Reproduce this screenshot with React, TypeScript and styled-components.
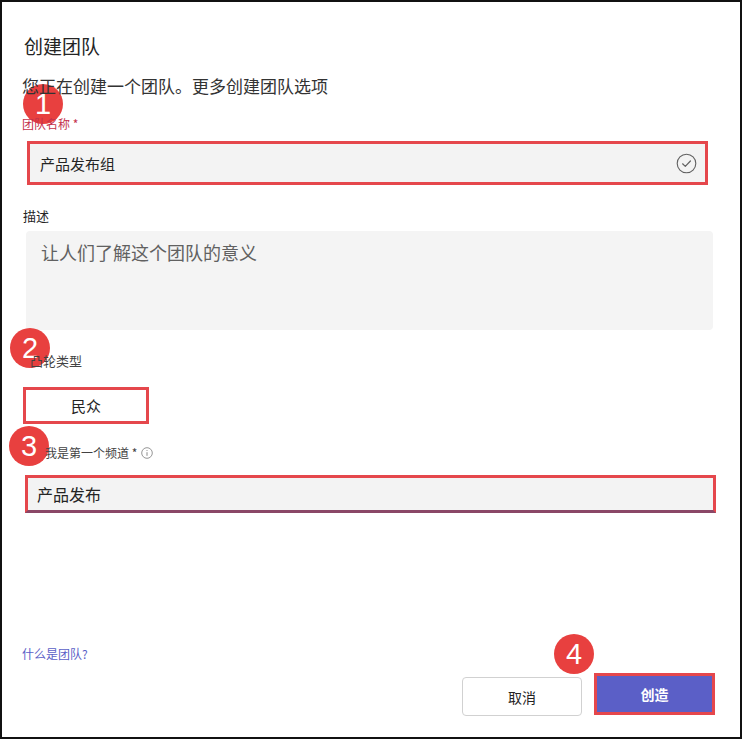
import React from "react";
import styled, { createGlobalStyle } from "styled-components";

const GlobalStyle = createGlobalStyle`
  html, body { margin: 0; padding: 0; background: #fff; }
  body { font-family: "Noto Sans CJK SC", "Noto Sans", sans-serif; color: #242424; }
`;

const Frame = styled.div`
  position: relative;
  box-sizing: border-box;
  width: 742px;
  height: 739px;
  border: 2px solid #111;
  padding: 33px 25px 22px 20px;
  display: flex;
  flex-direction: column;
`;

const Title = styled.h1`
  margin: 0 0 0 2px;
  font-size: 19px;
  line-height: 22px;
  font-weight: 400;
  color: #242424;
`;

const Subtitle = styled.p`
  position: relative;
  z-index: 1;
  margin: 18px 0 0 0;
  font-size: 17px;
  line-height: 22px;
  color: #333;
`;

const Label = styled.div<{ $top: number; $left?: number; $size?: number; $color?: string }>`
  position: relative;
  z-index: 1;
  margin-top: ${(p) => p.$top}px;
  margin-left: ${(p) => p.$left ?? 0}px;
  font-size: ${(p) => p.$size ?? 12}px;
  line-height: 16px;
  color: ${(p) => p.$color ?? "#424242"};
  display: flex;
  align-items: center;
  gap: 4px;
`;

const Highlighted = styled.div<{ $top: number; $left: number; $width: number; $height: number; $pad: number; $size: number; $bg?: string }>`
  box-sizing: border-box;
  margin-top: ${(p) => p.$top}px;
  margin-left: ${(p) => p.$left}px;
  width: ${(p) => p.$width}px;
  height: ${(p) => p.$height}px;
  border: 3px solid #e5474c;
  background: ${(p) => p.$bg ?? "#f3f3f3"};
  padding: 0 8px 0 ${(p) => p.$pad}px;
  display: flex;
  align-items: center;
  justify-content: space-between;
  font-size: ${(p) => p.$size}px;
  color: #242424;
`;

const ChannelInput = styled(Highlighted)`
  border-bottom-color: #8a4767;
`;

const TypeBox = styled.div`
  box-sizing: border-box;
  margin-top: 18px;
  margin-left: 1px;
  width: 126px;
  height: 37px;
  border: 3px solid #e5474c;
  background: #fff;
  display: flex;
  align-items: center;
  justify-content: center;
  font-size: 15px;
  color: #242424;
`;

const TextArea = styled.div`
  box-sizing: border-box;
  margin-top: 7px;
  margin-left: 4px;
  width: 687px;
  height: 99px;
  background: #f4f4f4;
  border-radius: 4px;
  padding: 10px 15px;
  font-size: 18px;
  line-height: 22px;
  color: #616161;
`;

const Spacer = styled.div`
  flex: 1;
`;

const HelpLink = styled.a`
  font-size: 12px;
  line-height: 16px;
  color: #5b5fc7;
  text-decoration: none;
  margin-bottom: 11px;
`;

const Footer = styled.div`
  display: flex;
  justify-content: flex-end;
  align-items: flex-end;
  gap: 12px;
`;

const CancelButton = styled.button`
  box-sizing: border-box;
  width: 120px;
  height: 39px;
  margin-bottom: -1px;
  border: 1px solid #d1d1d1;
  border-radius: 4px;
  background: #fff;
  font-family: inherit;
  font-size: 14px;
  color: #242424;
`;

const CreateButton = styled.button`
  box-sizing: border-box;
  width: 121px;
  height: 42px;
  border: 3px solid #e5474c;
  background: #5b5fc7;
  font-family: inherit;
  font-size: 14px;
  font-weight: 600;
  color: #fff;
`;

const Badge = styled.div<{ $x: number; $y: number }>`
  position: absolute;
  z-index: 0;
  left: ${(p) => p.$x}px;
  top: ${(p) => p.$y}px;
  width: 40px;
  height: 40px;
  border-radius: 50%;
  background: #e8403f;
  color: #fff;
  display: flex;
  align-items: center;
  justify-content: center;
  font-family: "Liberation Sans", Arial, sans-serif;
  font-size: 29px;
  line-height: 1;
`;

const CheckIcon = () => (
  <svg width="21" height="21" viewBox="0 0 21 21" fill="none">
    <circle cx="10.5" cy="10.5" r="9.3" stroke="#616161" strokeWidth="1.1" />
    <path d="M6.6 10.8 L9.3 13.4 L14.4 8" stroke="#616161" strokeWidth="1.2" strokeLinecap="round" strokeLinejoin="round" />
  </svg>
);

const InfoIcon = () => (
  <svg width="12" height="12" viewBox="0 0 12 12" fill="none">
    <circle cx="6" cy="6" r="5.3" stroke="#8a8a8a" strokeWidth="0.9" />
    <path d="M6 5.2 V8.8" stroke="#8a8a8a" strokeWidth="1" />
    <circle cx="6" cy="3.5" r="0.6" fill="#8a8a8a" />
  </svg>
);

export default function App() {
  return (
    <>
      <GlobalStyle />
      <Frame>
        <Badge $x={21} $y={82}>1</Badge>
        <Badge $x={8} $y={326}>2</Badge>
        <Badge $x={7} $y={424}>3</Badge>
        <Badge $x={552} $y={632}>4</Badge>

        <Title>创建团队</Title>
        <Subtitle>您正在创建一个团队。更多创建团队选项</Subtitle>

        <Label $top={19} $color="#c4314b">团队名称 *</Label>
        <Highlighted $top={9} $left={5} $width={681} $height={44} $pad={10} $size={15}>
          <span>产品发布组</span>
          <CheckIcon />
        </Highlighted>

        <Label $top={23} $left={1} $size={13} $color="#242424">描述</Label>
        <TextArea>让人们了解这个团队的意义</TextArea>

        <Label $top={23} $left={8} $size={13}>凸轮类型</Label>
        <TypeBox>民众</TypeBox>

        <Label $top={21} $left={23}>
          <span>我是第一个频道 *</span>
          <InfoIcon />
        </Label>
        <ChannelInput $top={14} $left={3} $width={691} $height={38} $pad={9} $size={16}>
          <span>产品发布</span>
        </ChannelInput>

        <Spacer />
        <HelpLink href="#">什么是团队?</HelpLink>
        <Footer>
          <CancelButton>取消</CancelButton>
          <CreateButton>创造</CreateButton>
        </Footer>
      </Frame>
    </>
  );
}
